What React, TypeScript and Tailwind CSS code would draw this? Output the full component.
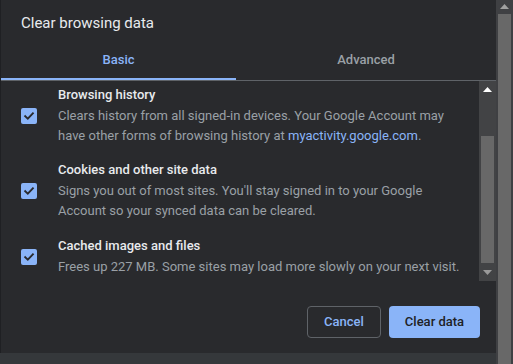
import React from 'react';

interface DataItem {
  title: string;
  description: React.ReactNode;
}

const items: DataItem[] = [
  {
    title: 'Browsing history',
    description: (
      <>
        Clears history from all signed-in devices. Your Google Account may have other forms of browsing history at{' '}
        <span className="text-[#8ab4f8]">myactivity.google.com</span>.
      </>
    ),
  },
  {
    title: 'Cookies and other site data',
    description: "Signs you out of most sites. You'll stay signed in to your Google Account so your synced data can be cleared.",
  },
  {
    title: 'Cached images and files',
    description: 'Frees up 227 MB. Some sites may load more slowly on your next visit.',
  },
];

const CheckBox = () => (
  <div className="w-4 h-4 shrink-0 rounded-[2px] bg-[#8ab4f8] flex items-center justify-center">
    <svg width="12" height="12" viewBox="0 0 12 12" fill="none">
      <path d="M2.2 6.2 L4.8 8.7 L9.9 3.4" stroke="#292a2d" strokeWidth="1.9" strokeLinecap="square" />
    </svg>
  </div>
);

const Arrow = ({ up, color }: { up?: boolean; color: string }) => (
  <svg width="9" height="5" viewBox="0 0 9 5">
    <path d={up ? 'M0 5 L4.5 0 L9 5 Z' : 'M0 0 L4.5 5 L9 0 Z'} fill={color} />
  </svg>
);

const App: React.FC = () => {
  return (
    <div
      className="w-[513px] h-[364px] flex overflow-hidden bg-[#35383b]"
      style={{ fontFamily: 'Roboto, "Liberation Sans", sans-serif' }}
    >
      <div className="w-[496px] flex flex-col">
        {/* Dialog */}
        <div className="h-[353px] bg-[#292a2d] border-l border-[#1f2023] flex flex-col">
          {/* Header */}
          <div className="h-[40px] pl-5 pt-[13px] text-[15px] leading-[20px] text-[#e8eaed]">
            Clear browsing data
          </div>

          {/* Tabs */}
          <div className="h-[41px] flex border-b border-[#5f6368]">
            <div className="relative w-[235px] flex items-center justify-center text-[13px] font-medium text-[#8ab4f8]">
              Basic
              <div className="absolute left-0 right-0 bottom-0 h-[2px] bg-[#8ab4f8]" />
            </div>
            <div className="flex-1 flex items-center justify-center text-[13px] font-medium text-[#9aa0a6]">
              Advanced
            </div>
          </div>

          {/* Scroll area */}
          <div className="h-[200px] flex">
            <div className="flex-1 flex flex-col gap-[14px] pt-[4px] pl-5 pr-3">
              {items.map((item, index) => (
                <div
                  key={item.title}
                  className={`flex items-center gap-[21px] ${index === 2 ? 'mt-[1px]' : ''}`}
                >
                  <CheckBox />
                  <div className="text-[13px] leading-[20px]">
                    <div className="text-[#e8eaed] font-medium">{item.title}</div>
                    <div className="mt-[1px] text-[#9aa0a6]">{item.description}</div>
                  </div>
                </div>
              ))}
            </div>
            {/* Inner scrollbar */}
            <div className="w-[17px] bg-[#424345] flex flex-col items-center">
              <div className="h-[17px] flex items-center justify-center">
                <Arrow up color="#ffffff" />
              </div>
              <div className="flex-1 w-full px-[2px] pt-[38px]">
                <div className="h-[127px] bg-[#686868]" />
              </div>
              <div className="h-[17px] flex items-center justify-center">
                <Arrow color="#9a9a9a" />
              </div>
            </div>
          </div>

          {/* Footer */}
          <div className="flex-1 flex justify-end items-start gap-2 pt-[25px] pr-4">
            <button className="h-8 w-[74px] rounded border border-[#5f6368] text-[13px] font-medium text-[#8ab4f8]">
              Cancel
            </button>
            <button className="h-8 w-[91px] rounded bg-[#8ab4f8] text-[13px] font-medium text-[#202124]">
              Clear data
            </button>
          </div>
        </div>
      </div>

      {/* Outer scrollbar */}
      <div className="w-[17px] bg-[#3f4043] flex flex-col items-center">
        <div className="h-[13px] flex items-center justify-center">
          <Arrow up color="#a0a0a0" />
        </div>
        <div className="flex-1 w-full px-[2px] pt-[1px]">
          <div className="h-full bg-[#686868]" />
        </div>
      </div>
    </div>
  );
};

export default App;
